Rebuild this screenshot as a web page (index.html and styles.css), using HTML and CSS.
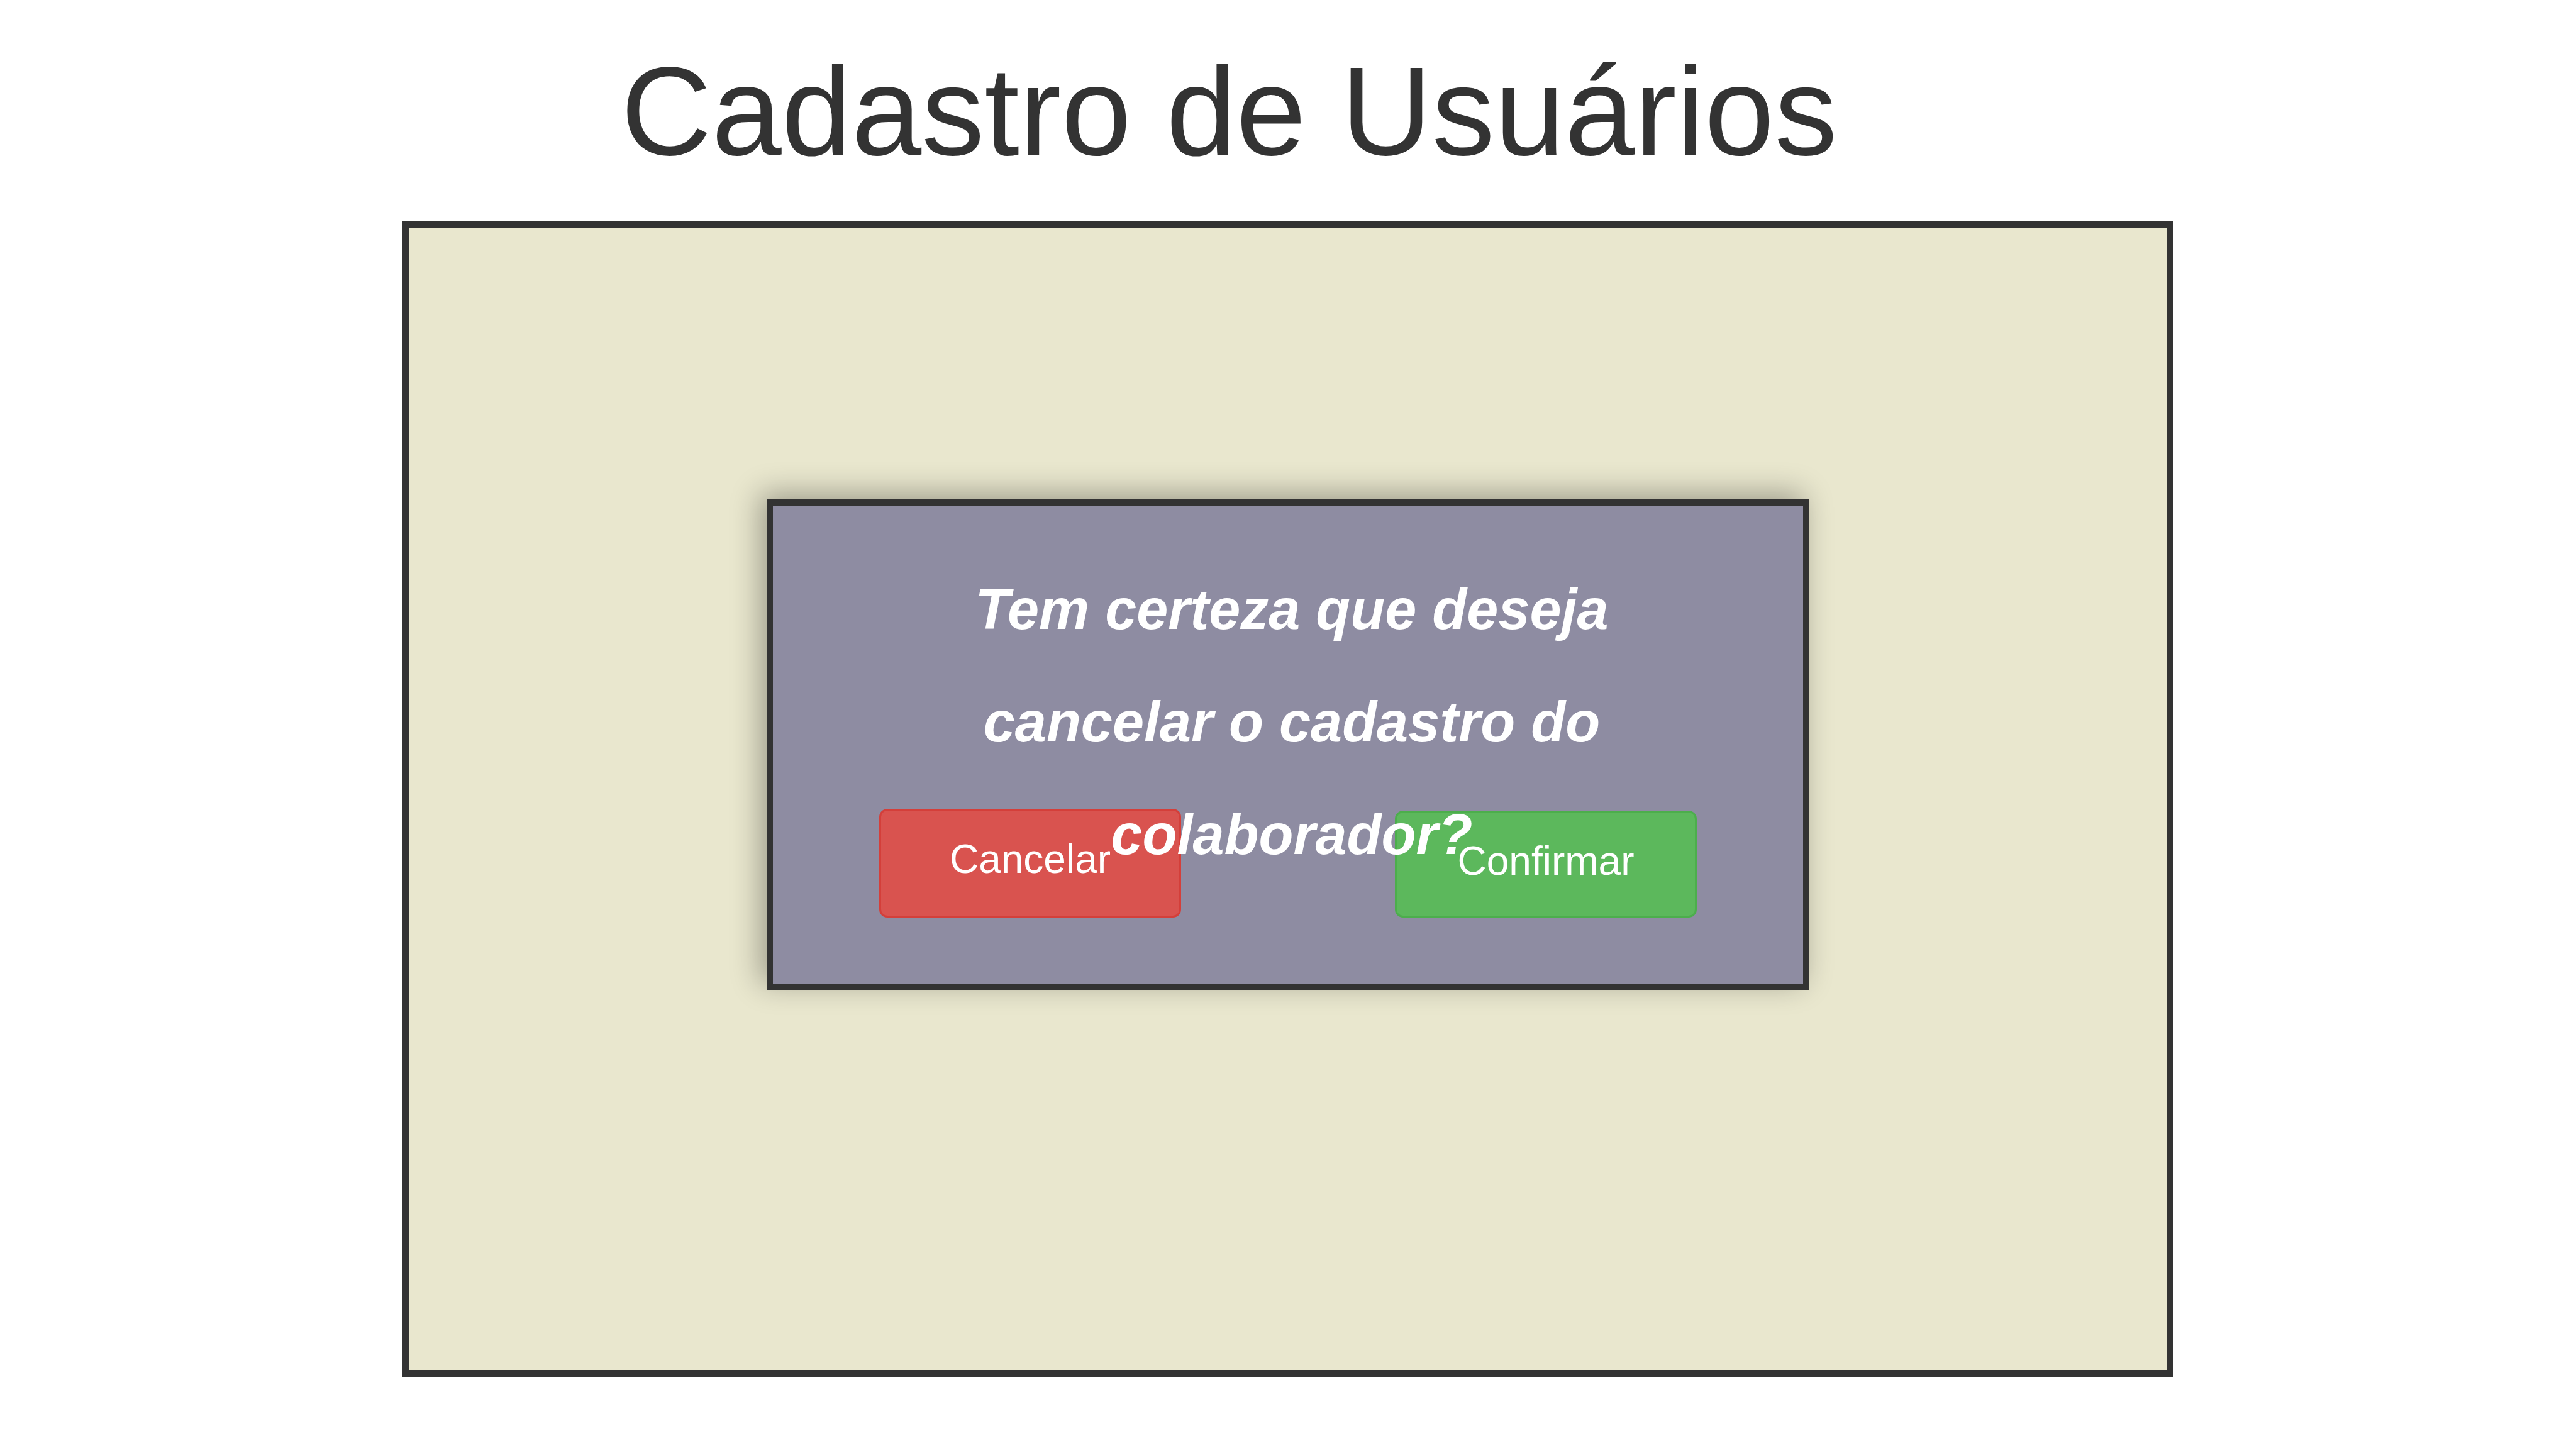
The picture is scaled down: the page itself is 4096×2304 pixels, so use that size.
FILE: index.html
```html
<!DOCTYPE html>
<html lang="pt-BR">
<head>
  <meta charset="utf-8">
  <title>Cadastro de Usuários</title>
  <link rel="stylesheet" href="styles.css">
</head>
<body>
  <header class="page-header">
    <h1 class="page-title">Cadastro de Usuários</h1>
  </header>
  <main class="panel">
    <section class="dialog" role="alertdialog" aria-labelledby="dialog-question">
      <p class="dialog-question" id="dialog-question">Tem certeza que deseja cancelar o cadastro do colaborador?</p>
      <div class="dialog-actions">
        <button type="button" class="btn btn-danger">Cancelar</button>
        <button type="button" class="btn btn-success">Confirmar</button>
      </div>
    </section>
  </main>
</body>
</html>
```

FILE: styles.css
```css
* {
  box-sizing: border-box;
}

body {
  display: flex;
  flex-direction: column;
  min-height: 100vh;
  margin: 0;
  padding-bottom: 115px;
  background: #fff;
  color: #333;
  font-family: "Liberation Sans", Arial, Helvetica, sans-serif;
}

.page-header {
  padding: 67px 0 65px 24.1%;
}

.page-title {
  margin: 0;
  font-size: 200px;
  font-weight: 400;
  line-height: 220px;
}

.panel {
  flex: 1;
  width: 68.75%;
  margin: 0 auto;
  padding-top: 432px;
  border: 10px solid #333;
  background: #e9e7ce;
}

.dialog {
  width: 59.3%;
  margin: 0 auto;
  padding: 76px 0 105px;
  border: 10px solid #333;
  background: #8e8ca2;
  box-shadow: -10px -10px 44px rgba(0, 0, 0, 0.32);
}

.dialog-question {
  position: relative;
  z-index: 1;
  max-width: 1100px;
  margin: 0 auto;
  padding-left: 12px;
  color: #fff;
  font-size: 90px;
  font-style: italic;
  font-weight: 700;
  line-height: 179px;
  text-align: center;
}

/* The row rises under the last line of the question. */
.dialog-actions {
  display: flex;
  align-items: flex-end;
  justify-content: space-between;
  margin-top: -131px;
  padding: 0 169px;
}

.btn {
  display: flex;
  align-items: flex-start;
  justify-content: center;
  width: 480px;
  padding: 31px 0 0;
  border: 3px solid;
  border-radius: 13px;
  color: #fff;
  font-family: inherit;
  font-size: 64px;
  line-height: 92px;
  cursor: pointer;
}

.btn-danger {
  height: 173px;
  border-color: #d43f3a;
  background: #d9534f;
}

.btn-success {
  height: 170px;
  border-color: #4cae4c;
  background: #5cb85c;
}
```
